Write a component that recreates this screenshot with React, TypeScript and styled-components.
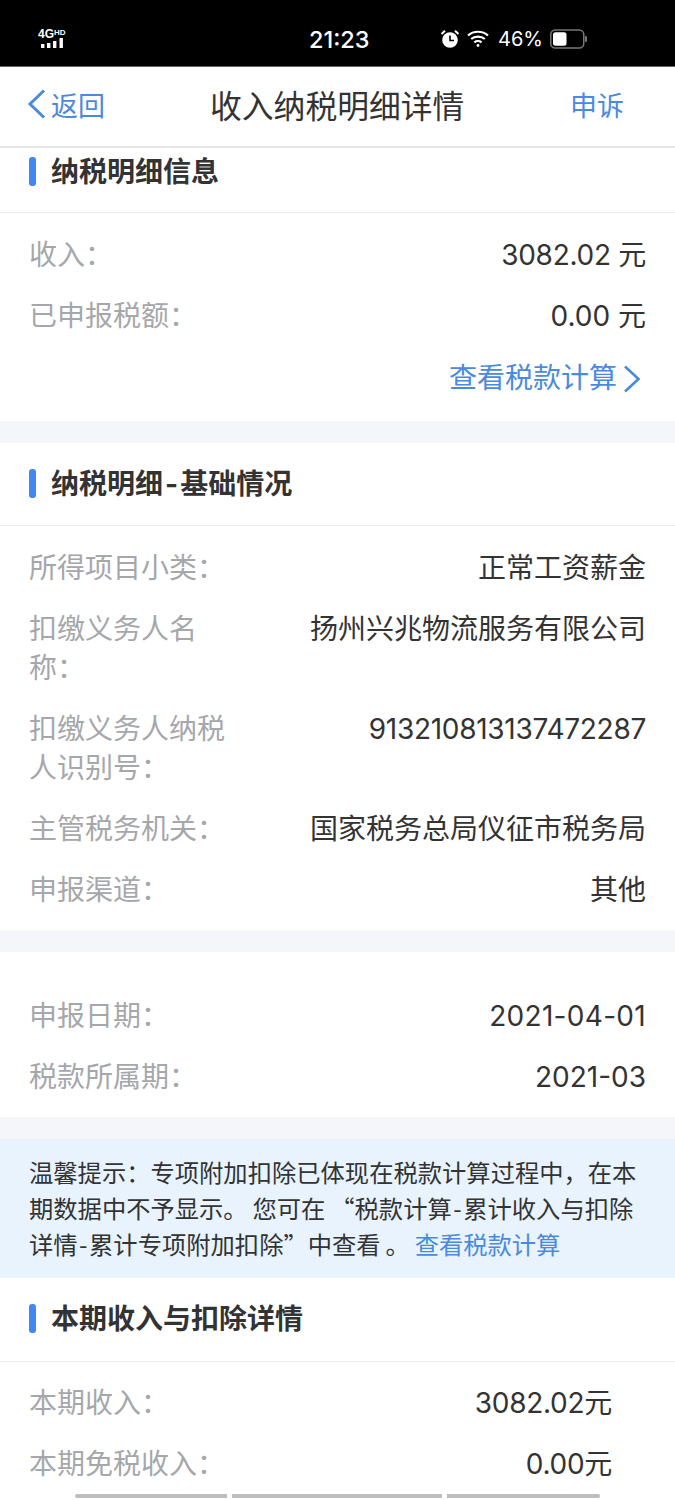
import React from 'react'
import styled, { createGlobalStyle } from 'styled-components'

const GlobalStyle = createGlobalStyle`
  html, body {
    margin: 0;
    padding: 0;
    background: #fff;
    overflow: hidden;
  }
  body {
    font-family: Inter, "Noto Sans CJK SC", sans-serif;
    color: #333;
  }
`

const Page = styled.div`
  position: relative;
  width: 675px;
  height: 1500px;
  overflow: hidden;
  background: #f4f6fa;
`

const StatusBar = styled.div`
  height: 67px;
  background: #000;
  border-bottom: 1px solid #666;
  box-sizing: border-box;
  color: #fff;
  display: grid;
  grid-template-columns: 271px 131px auto;
  padding: 12px 0 0 38px;
  align-items: center;
`

const Signal = styled.div`
  display: flex;
`

const Clock = styled.div`
  font-size: 23.5px;
  font-weight: 500;
`

const StatusRight = styled.div`
  display: flex;
  align-items: center;
  gap: 7px;
`

const BatteryText = styled.span`
  font-size: 20px;
  margin-left: 2px;
`

const Nav = styled.div`
  height: 81px;
  background: #fff;
  border-bottom: 2px solid #e6e6e6;
  box-sizing: border-box;
  display: grid;
  grid-template-columns: 183px auto 1fr;
  align-items: center;
  padding: 0 51px 5px 27px;
`

const NavBack = styled.div`
  display: flex;
  align-items: center;
  gap: 5px;
  color: #4a8ade;
  font-size: 27px;
`

const NavTitle = styled.div`
  font-size: 31.8px;
  color: #333;
`

const NavAction = styled.div`
  color: #4a8ade;
  font-size: 27px;
  text-align: right;
`

const Section = styled.section<{ $bottom: number; $top?: number }>`
  background: #fff;
  padding-top: ${(p) => p.$top ?? 0}px;
  padding-bottom: ${(p) => p.$bottom}px;
  margin-bottom: 22px;
`

const SectionHead = styled.div<{ $height: number; $textTop: number }>`
  height: ${(p) => p.$height}px;
  box-sizing: border-box;
  border-bottom: 1.5px solid #ececec;
  padding: ${(p) => p.$textTop}px 0 0 29px;
  display: flex;
  align-items: flex-start;
  gap: 15px;
`

const Accent = styled.span`
  width: 7px;
  height: 29px;
  margin-top: 4px;
  background: #4386f5;
  border-radius: 3px;
`

const HeadTitle = styled.h2`
  margin: 0;
  font-size: 28px;
  line-height: 38px;
  font-weight: 700;
  color: #333;
`

const Dash = styled.span`
  padding: 0 2px;
`

const Rows = styled.div<{ $top?: number }>`
  padding-top: ${(p) => p.$top ?? 12}px;
`

const Row = styled.div<{ $right?: number }>`
  display: flex;
  justify-content: space-between;
  padding: 11px ${(p) => p.$right ?? 29}px 11px 29px;
`

const Label = styled.div`
  width: 205px;
  font-size: 28px;
  line-height: 39px;
  color: #a5a7ab;
`

const Value = styled.div<{ $spacing?: number }>`
  font-size: 28px;
  line-height: 39px;
  color: #333;
  white-space: nowrap;
  letter-spacing: ${(p) => p.$spacing ?? 0}px;
`

const LinkRow = styled.div`
  display: flex;
  justify-content: flex-end;
  align-items: center;
  gap: 6px;
  padding: 12px 34px 11px 0;
  color: #4a8ade;
  font-size: 28px;
  line-height: 39px;
`

const Tip = styled.div`
  background: #e8f3fd;
  padding: 15px 29px 16px;
  font-family: "Noto Sans CJK SC", sans-serif;
  font-size: 24.3px;
  line-height: 36px;
  color: #333;
`

const TipLink = styled.span`
  color: #4a8ade;
`

const LastSection = styled.section`
  background: #fff;
  height: 222px;
`

const BottomBars = styled.div`
  position: absolute;
  left: 75px;
  bottom: 2px;
  display: flex;
  gap: 5px;
`

const BottomBar = styled.span<{ $width: number }>`
  width: ${(p) => p.$width}px;
  height: 4px;
  background: #bdbdbd;
  &:first-child {
    border-radius: 2px 0 0 2px;
  }
  &:last-child {
    border-radius: 0 2px 2px 0;
  }
`

const SignalIcon = () => (
  <svg width="30" height="28" viewBox="0 -4 30 28" fill="#fff">
    <text x="0" y="9" fontSize="12" fontWeight="700" fontFamily="Liberation Sans, sans-serif">4G</text>
    <text x="16" y="6" fontSize="8" fontWeight="700" fontFamily="Liberation Sans, sans-serif">HD</text>
    <rect x="3" y="15" width="3.4" height="4" />
    <rect x="9" y="14" width="3.4" height="5" />
    <rect x="15" y="12" width="3.4" height="7" />
    <rect x="21.5" y="9" width="3.4" height="10" />
  </svg>
)

const AlarmIcon = () => (
  <svg width="20" height="20" viewBox="0 0 20 20">
    <circle cx="10" cy="11" r="7.8" fill="#fff" />
    <path d="M10 6.5V11.5H14" stroke="#000" strokeWidth="1.6" fill="none" />
    <path d="M1.5 5 L5 1.8 M18.5 5 L15 1.8" stroke="#fff" strokeWidth="2" />
  </svg>
)

const WifiIcon = () => (
  <svg width="22" height="18" viewBox="0 0 22 18" fill="none" stroke="#fff" strokeWidth="2.2">
    <path d="M1 5.5C6.5 0.5 15.5 0.5 21 5.5" />
    <path d="M4.2 9C7.8 5.8 14.2 5.8 17.8 9" />
    <path d="M7.4 12.4C9.4 10.8 12.6 10.8 14.6 12.4" />
    <circle cx="11" cy="15.5" r="1.4" fill="#fff" stroke="none" />
  </svg>
)

const BatteryIcon = () => (
  <svg width="37" height="20" viewBox="0 0 37 20" fill="none">
    <rect x="0.75" y="1" width="33" height="18" rx="4.5" stroke="#777" strokeWidth="1.5" />
    <rect x="3" y="3.2" width="13.5" height="13.6" rx="2.5" fill="#fff" />
    <rect x="35" y="7" width="2" height="6" rx="1" fill="#777" />
  </svg>
)

const BackIcon = () => (
  <svg width="19" height="30" viewBox="0 0 19 30" fill="none" stroke="#4a8ade" strokeWidth="3">
    <path d="M17 1.5L3 15L17 28.5" />
  </svg>
)

const MoreIcon = () => (
  <svg width="18" height="28" viewBox="0 0 18 28" fill="none" stroke="#4a8ade" strokeWidth="2.6">
    <path d="M2 1.5L15.5 14L2 26.5" />
  </svg>
)

const basics = [
  { label: '所得项目小类\uFF1A', value: '正常工资薪金' },
  { label: '扣缴义务人名称\uFF1A', value: '扬州兴兆物流服务有限公司' },
  { label: '扣缴义务人纳税人识别号\uFF1A', value: '913210813137472287', spacing: -0.28 },
  { label: '主管税务机关\uFF1A', value: '国家税务总局仪征市税务局' },
  { label: '申报渠道\uFF1A', value: '其他' },
]

const dates = [
  { label: '申报日期\uFF1A', value: '2021-04-01', spacing: 0.3 },
  { label: '税款所属期\uFF1A', value: '2021-03' },
]

const current = [
  ['本期收入\uFF1A', '3082.02元'],
  ['本期免税收入\uFF1A', '0.00元'],
]

const tipText =
  '温馨提示\uFF1A专项附加扣除已体现在税款计算过程中\uFF0C在本期数据中不予显示。\u2009您可在\u2009\u201C税款计算\u200A-\u200A累计收入与扣除详情\u200A-\u200A累计专项附加扣除\u201D中查看\u2009。\u2009'

export default function App() {
  return (
    <Page>
      <GlobalStyle />
      <StatusBar>
        <Signal>
          <SignalIcon />
        </Signal>
        <Clock>21:23</Clock>
        <StatusRight>
          <AlarmIcon />
          <WifiIcon />
          <BatteryText>46%</BatteryText>
          <BatteryIcon />
        </StatusRight>
      </StatusBar>
      <Nav>
        <NavBack>
          <BackIcon />
          返回
        </NavBack>
        <NavTitle>收入纳税明细详情</NavTitle>
        <NavAction>申诉</NavAction>
      </Nav>

      <Section $bottom={12}>
        <SectionHead $height={65} $textTop={5}>
          <Accent />
          <HeadTitle>纳税明细信息</HeadTitle>
        </SectionHead>
        <Rows>
          <Row>
            <Label>{'收入\uFF1A'}</Label>
            <Value $spacing={-0.28}>3082.02 元</Value>
          </Row>
          <Row>
            <Label>{'已申报税额\uFF1A'}</Label>
            <Value>0.00 元</Value>
          </Row>
          <LinkRow>
            查看税款计算
            <MoreIcon />
          </LinkRow>
        </Rows>
      </Section>

      <Section $bottom={9}>
        <SectionHead $height={83} $textTop={22}>
          <Accent />
          <HeadTitle>纳税明细<Dash>-</Dash>基础情况</HeadTitle>
        </SectionHead>
        <Rows>
          {basics.map((item) => (
            <Row key={item.label}>
              <Label>{item.label}</Label>
              <Value $spacing={item.spacing}>{item.value}</Value>
            </Row>
          ))}
        </Rows>
      </Section>

      <Section $bottom={9} $top={22}>
        <Rows>
          {dates.map((item) => (
            <Row key={item.label}>
              <Label>{item.label}</Label>
              <Value $spacing={item.spacing}>{item.value}</Value>
            </Row>
          ))}
        </Rows>
      </Section>

      <Tip>
        {tipText}
        <TipLink>查看税款计算</TipLink>
      </Tip>

      <LastSection>
        <SectionHead $height={84} $textTop={22}>
          <Accent />
          <HeadTitle>本期收入与扣除详情</HeadTitle>
        </SectionHead>
        <Rows $top={11}>
          {current.map(([label, value]) => (
            <Row key={label} $right={63}>
              <Label>{label}</Label>
              <Value $spacing={-0.28}>{value}</Value>
            </Row>
          ))}
        </Rows>
      </LastSection>

      <BottomBars>
        <BottomBar $width={152} />
        <BottomBar $width={210} />
        <BottomBar $width={153} />
      </BottomBars>
    </Page>
  )
}
